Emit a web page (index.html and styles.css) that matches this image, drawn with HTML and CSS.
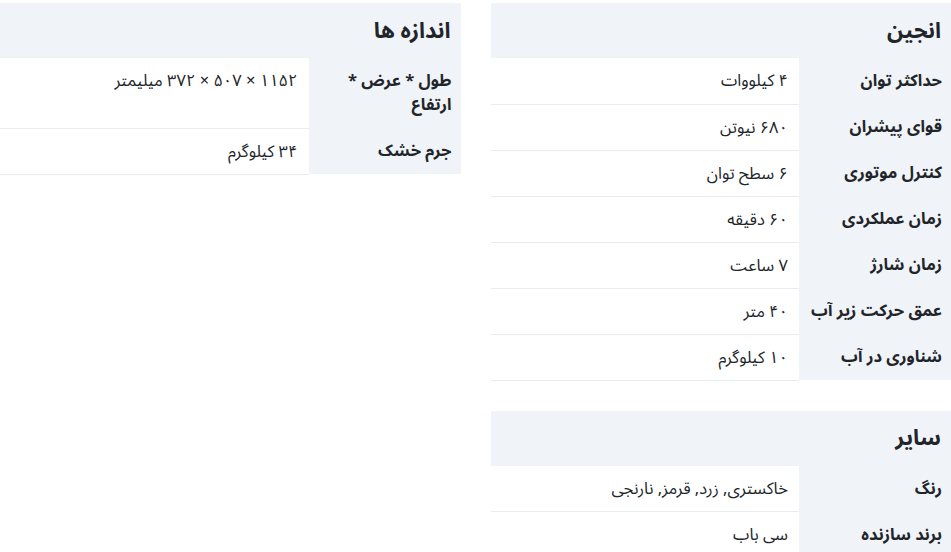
FILE: index.html
```html
<!DOCTYPE html>
<html lang="fa" dir="rtl">
<head>
<meta charset="utf-8">
<title>مشخصات</title>
<link rel="stylesheet" href="styles.css">
</head>
<body>
<div class="specs">
  <div class="col">
    <section class="group">
      <h3 class="group-title">انجین</h3>
      <table class="spec-table">
        <tr><th>حداکثر توان</th><td>۴ کیلووات</td></tr>
        <tr><th>قوای پیشران</th><td>۶۸۰ نیوتن</td></tr>
        <tr><th>کنترل موتوری</th><td>۶ سطح توان</td></tr>
        <tr><th>زمان عملکردی</th><td>۶۰ دقیقه</td></tr>
        <tr><th>زمان شارژ</th><td>۷ ساعت</td></tr>
        <tr><th>عمق حرکت زیر آب</th><td>۴۰ متر</td></tr>
        <tr><th>شناوری در آب</th><td>۱۰ کیلوگرم</td></tr>
      </table>
    </section>
    <section class="group">
      <h3 class="group-title">سایر</h3>
      <table class="spec-table">
        <tr><th>رنگ</th><td>خاکستری, زرد, قرمز, نارنجی</td></tr>
        <tr><th>برند سازنده</th><td>سی باب</td></tr>
      </table>
    </section>
  </div>
  <div class="col">
    <section class="group">
      <h3 class="group-title">اندازه ها</h3>
      <table class="spec-table">
        <tr><th>طول * عرض * ارتفاع</th><td>۱۱۵۲ × ۵۰۷ × ۳۷۲ میلیمتر</td></tr>
        <tr><th>جرم خشک</th><td>۳۴ کیلوگرم</td></tr>
      </table>
    </section>
  </div>
</div>
</body>
</html>
```
FILE: styles.css
```css
html, body {
  margin: 0;
  padding: 0;
  background: #ffffff;
}
body {
  font-family: "Noto Sans Arabic", "Noto Naskh Arabic", "DejaVu Sans", sans-serif;
  color: #212529;
}
.specs {
  display: grid;
  grid-template-columns: 1fr 1fr;
  column-gap: 30px;
  padding-top: 3px;
}
.col {
  display: flex;
  flex-direction: column;
  gap: 30px;
}
.group-title {
  margin: 0;
  height: 55px;
  box-sizing: border-box;
  padding: 0 10px;
  display: flex;
  align-items: center;
  background: #f0f3f8;
  font-size: 22px;
  font-weight: bold;
}
.spec-table {
  width: 100%;
  border-collapse: collapse;
}
.spec-table th {
  width: 152px;
  box-sizing: border-box;
  background: #f0f3f8;
  text-align: right;
  vertical-align: top;
  font-size: 16.5px;
  font-weight: bold;
  line-height: 24px;
  padding: 11px 9px 11px 10px;
}
.spec-table td {
  text-align: right;
  vertical-align: top;
  font-size: 16.5px;
  line-height: 24px;
  padding: 11px 11px 10px;
  border-bottom: 1px solid #e9ecef;
}
```
